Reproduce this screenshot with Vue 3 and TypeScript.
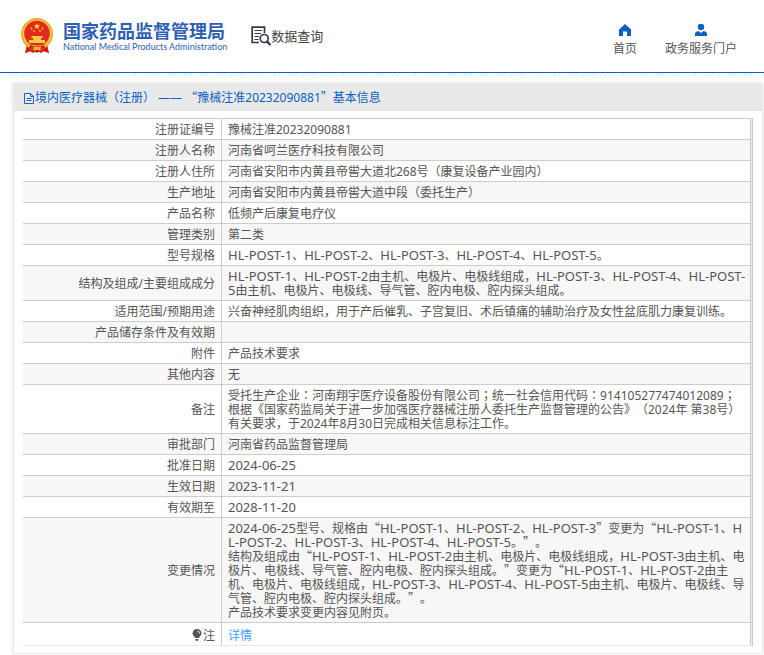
<script setup lang="ts">
interface Row {
  label: string
  lines: string[]
  breakAll?: boolean
}

interface Segment {
  text: string
  kind: '' | 'quote' | 'colon' | 'code'
}

const registration = '豫械注准20232090881'

const rows: Row[] = [
  { label: '注册证编号', lines: [registration] },
  { label: '注册人名称', lines: ['河南省呵兰医疗科技有限公司'] },
  { label: '注册人住所', lines: ['河南省安阳市内黄县帝喾大道北268号（康复设备产业园内）'] },
  { label: '生产地址', lines: ['河南省安阳市内黄县帝喾大道中段（委托生产）'] },
  { label: '产品名称', lines: ['低频产后康复电疗仪'] },
  { label: '管理类别', lines: ['第二类'] },
  { label: '型号规格', lines: ['HL-POST-1、HL-POST-2、HL-POST-3、HL-POST-4、HL-POST-5。'] },
  {
    label: '结构及组成/主要组成成分',
    lines: ['HL-POST-1、HL-POST-2由主机、电极片、电极线组成，HL-POST-3、HL-POST-4、HL-POST-5由主机、电极片、电极线、导气管、腔内电极、腔内探头组成。'],
  },
  { label: '适用范围/预期用途', lines: ['兴奋神经肌肉组织，用于产后催乳、子宫复旧、术后镇痛的辅助治疗及女性盆底肌力康复训练。'] },
  { label: '产品储存条件及有效期', lines: [''] },
  { label: '附件', lines: ['产品技术要求'] },
  { label: '其他内容', lines: ['无'] },
  {
    label: '备注',
    lines: ['受托生产企业：河南翔宇医疗设备股份有限公司；统一社会信用代码：914105277474012089；根据《国家药监局关于进一步加强医疗器械注册人委托生产监督管理的公告》（2024年 第38号）有关要求，于2024年8月30日完成相关信息标注工作。'],
  },
  { label: '审批部门', lines: ['河南省药品监督管理局'] },
  { label: '批准日期', lines: ['2024-06-25'] },
  { label: '生效日期', lines: ['2023-11-21'] },
  { label: '有效期至', lines: ['2028-11-20'] },
  {
    label: '变更情况',
    breakAll: true,
    lines: [
      '2024-06-25型号、规格由“HL-POST-1、HL-POST-2、HL-POST-3”变更为“HL-POST-1、HL-POST-2、HL-POST-3、HL-POST-4、HL-POST-5。”。',
      '结构及组成由“HL-POST-1、HL-POST-2由主机、电极片、电极线组成，HL-POST-3由主机、电极片、电极线、导气管、腔内电极、腔内探头组成。”变更为“HL-POST-1、HL-POST-2由主机、电极片、电极线组成，HL-POST-3、HL-POST-4、HL-POST-5由主机、电极片、电极线、导气管、腔内电极、腔内探头组成。”。',
      '产品技术要求变更内容见附页。',
    ],
  },
]

function kindOf(part: string): Segment['kind'] {
  if (/^[“”]/.test(part)) return 'quote'
  if (/^[：；]/.test(part)) return 'colon'
  if (/^[A-Z0-9]+-/.test(part)) return 'code'
  return ''
}

// Curly quotes take the full-width CJK form, colons sit centred in their cell,
// and hyphenated codes and dates are set one size up.
function segments(text: string): Segment[] {
  return text
    .split(/([“”]+|[：；]|[A-Z0-9]+(?:-[A-Z0-9]+)+)/)
    .filter((part) => part !== '')
    .map((part) => ({ text: part, kind: kindOf(part) }))
}

const title = segments(`境内医疗器械（注册） —— “${registration}”基本信息`)
</script>

<template>
  <div class="page">
    <header class="top">
      <a class="brand" href="#">
        <svg class="emblem" viewBox="0 0 32 36" aria-hidden="true">
          <path d="M6 26 4 35l5-2 3 2 4-2 4 2 3-2 5 2-2-9z" fill="#d92219" />
          <circle cx="16" cy="16" r="16" fill="#e9ab2b" />
          <circle cx="16" cy="16" r="14.3" fill="#f3cc49" />
          <circle cx="16" cy="15.500" r="12.800" fill="#e02a1c" />
          <path d="m16 5 .9 2.200 2.400.1-1.900 1.500.7 2.300-2.100-1.300-2.100 1.300.7-2.300-1.900-1.500 2.400-.1z" fill="#f8dc4b" />
          <g fill="#f5c944">
            <circle cx="10.500" cy="10.500" r=".9" />
            <circle cx="13" cy="13" r=".9" />
            <circle cx="19" cy="13" r=".9" />
            <circle cx="21.500" cy="10.500" r=".9" />
            <path d="M11 18h10l1 2h-2v2h4v3H8v-3h4v-2h-2z" />
          </g>
          <path d="M5 25q11 5 22 0l-2 4q-9 3-18 0z" fill="#eeb432" />
          <path d="M9 27q7 3 14 0l1 3q-8 3-16 0z" fill="#d92219" />
          <path d="M12 29h8l-1 4h-6z" fill="#eeb432" />
          <path d="m4 35 3-5 3 3zM28 35l-3-5-3 3zM13 32h6l-3 3z" fill="#c81d16" />
        </svg>
        <span class="names">
          <strong>国家药品监督管理局</strong>
          <small>National Medical Products Administration</small>
        </span>
      </a>
      <a class="query" href="#">
        <svg viewBox="0 0 20 20" aria-hidden="true" fill="none" stroke="#38374a">
          <path d="M13.500 7V1.200H1.200v15.300H8" stroke-width="1.700" />
          <path d="M3.500 4.500h7.500M3.500 7.500h6.500M3.500 10.500h4.500M3.500 13.500h4" stroke-width="1.200" />
          <circle cx="13.200" cy="12.500" r="4" stroke-width="1.700" />
          <path d="m16 15.500 3.400 3.500" stroke-width="2.400" />
        </svg>
        <span>数据查询</span>
      </a>
      <nav class="links">
        <a href="#">
          <svg viewBox="0 0 14 14" aria-hidden="true"><path d="M7 1 1 6.500V13h4V8.500h4V13h4V6.500z" fill="#0a61c2" /></svg>
          <span>首页</span>
        </a>
        <a href="#">
          <svg viewBox="0 0 14 14" aria-hidden="true">
            <circle cx="7" cy="4" r="3.200" fill="#0a61c2" />
            <path d="M1 13V11q0-2.500 3.500-3L7 10l2.500-2Q13 8.500 13 11v2z" fill="#0a61c2" />
          </svg>
          <span>政务服务门户</span>
        </a>
      </nav>
    </header>
    <div class="hatch"></div>

    <main class="panel">
      <h1 class="panel-title">
        <svg viewBox="0 0 10 12" aria-hidden="true" fill="none" stroke="#1a62bd">
          <path d="M.5 1.500v10h9v-7l-3-3zM6.500 1.500v3h3M2.500 6.500h5M2.500 8.500h5" />
        </svg>
        <span><span v-for="(s, i) in title" :key="i" :class="s.kind">{{ s.text }}</span></span>
      </h1>
      <div class="panel-body">
        <div class="frame">
          <table>
            <tbody>
              <tr v-for="row in rows" :key="row.label">
                <th scope="row">{{ row.label }}</th>
                <td :class="{ 'break-all': row.breakAll }">
                  <div v-for="(line, n) in row.lines" :key="n"><span v-for="(s, i) in segments(line)" :key="i" :class="s.kind">{{ s.text }}</span></div>
                </td>
              </tr>
              <tr class="note">
                <th scope="row">
                  <svg viewBox="0 0 10 12" aria-hidden="true">
                    <path d="M5 0a4.500 4.500 0 0 1 4.500 4.500C9.500 6.500 7 7.500 7 9H3C3 7.500.5 6.500.5 4.500A4.500 4.500 0 0 1 5 0zM3.500 10h3v1l-1 1h-1l-1-1z" fill="#555" />
                    <path d="M5.500 2q2 .5 2 2.500" fill="none" stroke="#fff" />
                  </svg>注
                </th>
                <td><a href="#">详情</a></td>
              </tr>
            </tbody>
          </table>
        </div>
      </div>
    </main>
  </div>
</template>

<style>
body {
  margin: 0;
  background: #fff;
}
</style>

<style scoped>
.page {
  color: #555;
  font-family: "Noto Sans", "Noto Sans CJK SC", sans-serif;
  font-size: 12px;
  line-height: 14px;
  text-spacing-trim: space-all;
}

a {
  color: inherit;
  text-decoration: none;
}

.quote {
  font-family: "Noto Sans CJK SC", sans-serif;
  line-height: 0;
}

.colon {
  font-family: "Noto Sans CJK TC", sans-serif;
  line-height: 0;
}

.code {
  font-size: 13px;
  line-height: 0;
}

.top {
  display: flex;
  align-items: center;
  box-sizing: border-box;
  height: 73px;
  padding: 0 27px 0 21px;
  border-bottom: 1px solid #0062c4;
}

.brand {
  display: flex;
  align-items: center;
  gap: 10px;
  color: #2f5fb3;
}

.emblem {
  width: 32px;
  height: 36px;
}

.names {
  display: flex;
  flex-direction: column;
  white-space: nowrap;
}

.names strong {
  font-family: "Noto Sans CJK SC", sans-serif;
  font-size: 18px;
  line-height: 22px;
}

.names small {
  font-family: Lato, sans-serif;
  font-size: 9px;
  line-height: 12px;
}

.query {
  display: flex;
  align-items: center;
  margin-left: 24px;
  color: #444;
  font-size: 13px;
}

.query svg {
  width: 20px;
  height: 20px;
}

.links {
  display: flex;
  gap: 28px;
  margin-left: auto;
  padding-top: 6px;
}

.links a {
  display: flex;
  flex-direction: column;
  align-items: center;
  gap: 5px;
}

.links svg {
  width: 14px;
  height: 14px;
}

.hatch {
  height: 3px;
  background: repeating-linear-gradient(135deg, #e9e9e9 0 1px, #fff 1px 3px);
}

.panel {
  margin: 7px 1px 0 13px;
  border: 1px solid #e6e8ee;
  border-top: 0;
  box-shadow: 0 0 5px #e4e4e4;
}

.panel-title {
  display: flex;
  align-items: center;
  gap: 1px;
  box-sizing: border-box;
  height: 28px;
  margin: 0;
  padding: 2px 10px 0;
  border-bottom: 1px solid #e4e6ee;
  background: #e9e9e9;
  color: #0a61c2;
  font-size: 12px;
  font-weight: normal;
}

.panel-title svg {
  width: 10px;
  height: 12px;
}

.panel-body {
  padding: 7px 9px;
}

.frame {
  padding-right: 1px;
  border-right: 1px solid #ccc;
  background: #e8e8f0;
}

table {
  width: 100%;
  border-collapse: separate;
  border-spacing: 0;
  border-bottom: 1px solid #e8e8f0;
  background: #fff;
  table-layout: fixed;
}

th,
td {
  height: 14px;
  padding: 4px 6px 2px;
  border-top: 1px solid #ccc;
  border-right: 1px solid #ccc;
  font-weight: normal;
  vertical-align: middle;
}

th {
  box-sizing: border-box;
  width: 199px;
  text-align: right;
}

td {
  padding-right: 3px;
  text-align: left;
}

tr:nth-child(even) {
  background: #f7f7f7;
}

tr.note {
  background: #fff;
}

.note th,
.note td {
  padding-top: 6px;
}

.note a {
  color: #409eff;
}

.note svg {
  width: 10px;
  height: 12px;
  margin-right: 1px;
  vertical-align: -1px;
}

.break-all {
  word-break: break-all;
}
</style>
